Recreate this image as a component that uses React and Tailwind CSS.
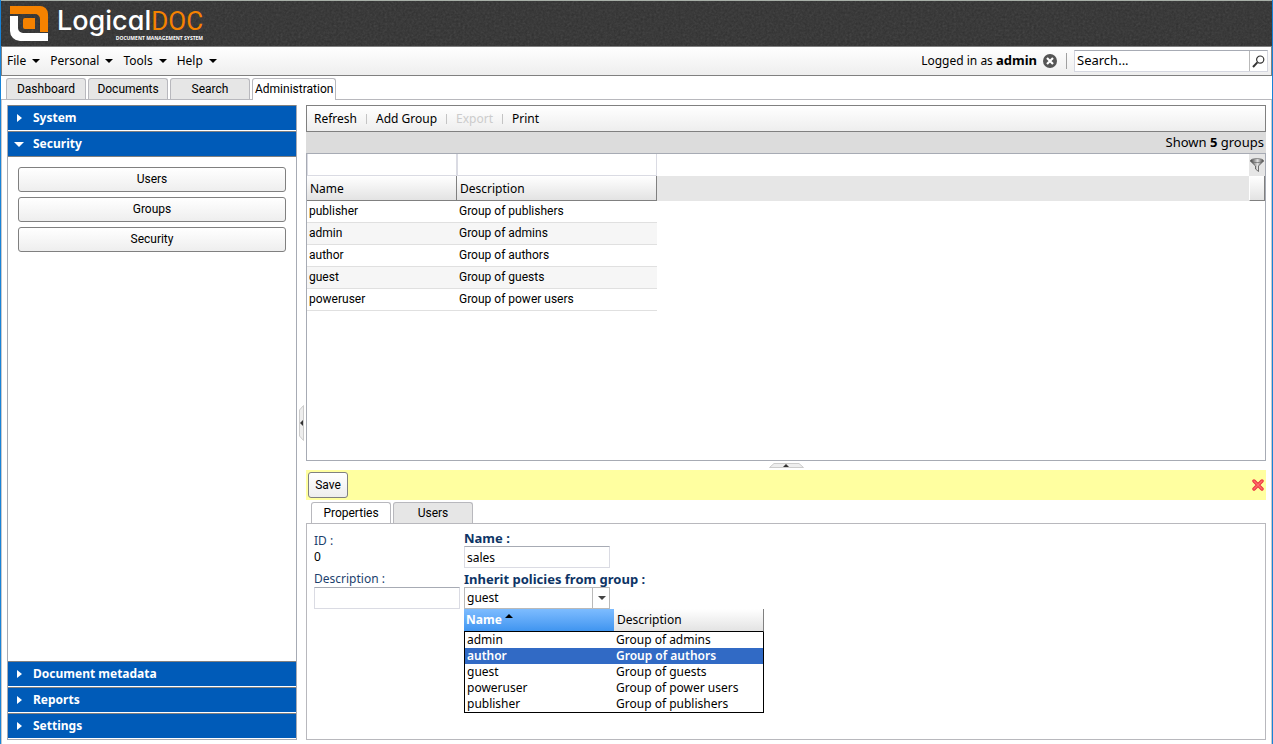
import React from "react";
import { useState } from "react";

const groups = [
  { name: "publisher", description: "Group of publishers" },
  { name: "admin", description: "Group of admins" },
  { name: "author", description: "Group of authors" },
  { name: "guest", description: "Group of guests" },
  { name: "poweruser", description: "Group of power users" },
];

const sortedGroups = [...groups].sort((a, b) => a.name.localeCompare(b.name));

const Logo = () => {
  return (
    <a href="#" className="relative flex items-start pl-[9px] pt-1">
      <svg width="38" height="36" viewBox="0 0 38 36">
        <path d="M0 1h30a8 8 0 0 1 8 8v18h-8V14a5 5 0 0 0-5-5H0z" fill="#f58200" />
        <path d="M0 11h8v12a5 5 0 0 0 5 5h25v8H10A10 10 0 0 1 0 26z" fill="#fff" />
        <path d="M15 13h10v11H15a2 2 0 0 1-2-2v-7a2 2 0 0 1 2-2z" fill="#f58200" />
      </svg>
      <div className="flex flex-col items-end pl-[9px]">
        <div className="flex items-baseline leading-8">
          <span className="font-['Inter',sans-serif] text-[27px] font-medium text-white [font-feature-settings:'cv11']">
            Logical
          </span>
          <span className="font-['Roboto',sans-serif] text-[26px] text-[#f58200]">DOC</span>
        </div>
        <span className="-mt-px font-['Open_Sans',sans-serif] text-[5px] font-bold leading-[4px] text-white">
          DOCUMENT MANAGEMENT SYSTEM
        </span>
      </div>
    </a>
  );
};

const Header = () => {
  return (
    <header className="relative h-[46px] shrink-0 overflow-hidden border-t border-[#a8b0a8] bg-[#303030]">
      <svg className="absolute inset-0 h-full w-full opacity-15" aria-hidden="true">
        <filter id="grain">
          <feTurbulence type="fractalNoise" baseFrequency="0.45" numOctaves="2" />
          <feColorMatrix type="saturate" values="0" />
        </filter>
        <rect width="100%" height="100%" filter="url(#grain)" />
      </svg>
      <Logo />
    </header>
  );
};

const MenuBar = () => {
  return (
    <div className="flex h-[30px] shrink-0 items-center justify-between border border-[#808080] bg-linear-to-b from-white to-[#eeeeee] pl-[5px] pr-[3px]">
      <nav className="flex gap-[10px]">
        {["File", "Personal", "Tools", "Help"].map((item) => (
          <button key={item} type="button" className="flex items-center gap-[6px]">
            {item}
            <svg width="8" height="4" viewBox="0 0 8 4">
              <path d="M0 0h8L4 4z" />
            </svg>
          </button>
        ))}
      </nav>
      <div className="flex items-center">
        <span>
          Logged in as <b className="text-[13px]">admin</b>
        </span>
        <button type="button" aria-label="Logout" className="ml-[6px]">
          <svg width="14" height="14" viewBox="0 0 14 14">
            <circle cx="7" cy="7" r="7" fill="#555" />
            <path d="M4 4l6 6M10 4l-6 6" stroke="#fff" strokeWidth="2.2" />
          </svg>
        </button>
        <div className="ml-[9px] mr-[7px] h-4 w-px bg-[#a0a0a0]" />
        <div className="flex h-[22px] border border-[#d5d7e0] border-t-[#a7abb4] bg-white">
          <input
            aria-label="Search"
            defaultValue="Search..."
            className="w-[174px] px-[2px] text-[13px] outline-none"
          />
          <button
            type="button"
            aria-label="Search"
            className="flex w-[18px] items-center justify-center border-l border-[#b9b9b9]"
          >
            <svg width="13" height="13" viewBox="0 0 13 13" fill="none" stroke="#333">
              <circle cx="8.2" cy="4.6" r="3.6" strokeWidth="1.2" />
              <path d="M5.4 7.4L1 12" strokeWidth="2" />
            </svg>
          </button>
        </div>
      </div>
    </div>
  );
};

const Tab = ({ label, active }) => {
  return (
    <button
      type="button"
      role="tab"
      aria-selected={!!active}
      className={
        "min-w-[80px] rounded-t-[3px] border border-b-0 border-[#b8b8bd] px-[2px] font-['Roboto',sans-serif] " +
        (active ? "-mb-px h-[22px] bg-white pb-px" : "h-[21px] bg-[#e6e6e6]")
      }
    >
      {label}
    </button>
  );
};

const SectionHeader = ({ label, open }) => {
  return (
    <button
      type="button"
      aria-expanded={!!open}
      className={
        "flex h-[26px] w-full shrink-0 items-center border-t border-b border-t-[#808080] bg-[#005bb8] pl-[6px] text-left font-bold text-white " +
        (open ? "border-b-[#808080]" : "border-b-white")
      }
    >
      <svg width="12" height="10" viewBox="0 0 12 10" fill="#fff">
        {open ? <path d="M0 3h10l-5 5z" /> : <path d="M3 1l5 4-5 4z" />}
      </svg>
      <span className="pl-[7px]">{label}</span>
    </button>
  );
};

const Sidebar = () => {
  return (
    <aside className="flex w-[290px] shrink-0 flex-col border border-t-0 border-[#a7abb4]">
      <SectionHeader label="System" />
      <SectionHeader label="Security" open />
      <div className="flex grow flex-col gap-[5px] p-[10px]">
        {["Users", "Groups", "Security"].map((item) => (
          <button
            key={item}
            type="button"
            className="h-[25px] rounded-[3px] border border-[#808080] bg-linear-to-b from-white to-[#eeeeee] pb-[2px] font-['Roboto',sans-serif]"
          >
            {item}
          </button>
        ))}
      </div>
      <SectionHeader label="Document metadata" />
      <SectionHeader label="Reports" />
      <SectionHeader label="Settings" />
    </aside>
  );
};

const Toolbar = () => {
  return (
    <div className="flex h-[27px] shrink-0 items-center gap-[9px] border border-[#808080] bg-linear-to-b from-white to-[#eeeeee] px-[7px]">
      <button type="button">Refresh</button>
      <div className="h-[10px] w-px bg-[#c4c4c4]" />
      <button type="button">Add Group</button>
      <div className="h-[10px] w-px bg-[#c4c4c4]" />
      <button type="button" disabled className="text-[#cccccc]">
        Export
      </button>
      <div className="h-[10px] w-px bg-[#c4c4c4]" />
      <button type="button">Print</button>
    </div>
  );
};

const GroupsGrid = () => {
  return (
    <div className="relative min-h-0 grow border border-[#a7abb4]">
      {/* filter and header strips that run on past the last column */}
      <div className="flex h-[22px] justify-end">
        <button
          type="button"
          aria-label="Filter"
          className="flex w-4 items-center justify-center bg-[#e6e6e6]"
        >
          <svg width="14" height="14" viewBox="0 0 14 14">
            <defs>
              <linearGradient id="funnel">
                <stop offset="0" stopColor="#444" />
                <stop offset="0.55" stopColor="#e2e2e2" />
                <stop offset="1" stopColor="#444" />
              </linearGradient>
            </defs>
            <path d="M.4 3L5.500 8v3l3 2.500V8l5-5z" fill="url(#funnel)" stroke="#555" strokeWidth="0.8" />
            <ellipse cx="7" cy="2.6" rx="6.5" ry="2" fill="url(#funnel)" stroke="#666" strokeWidth="0.7" />
          </svg>
        </button>
      </div>
      <div className="flex h-[25px] justify-end bg-[#e6e6e6]">
        <div className="w-4 border-r border-b border-l border-[#808080] border-l-white bg-linear-to-b from-white to-[#e3e3e3]" />
      </div>
      <table className="absolute left-0 top-0 w-[350px] table-fixed border-separate border-spacing-0 text-left">
        <thead>
          <tr className="h-[22px]">
            <td className="w-[150px] p-0">
              <input
                aria-label="Filter by name"
                className="block h-[22px] w-full border border-t-0 border-[#dadbe3] bg-white px-[2px] outline-none"
              />
            </td>
            <td className="w-[200px] p-0">
              <input
                aria-label="Filter by description"
                className="block h-[22px] w-full border border-t-0 border-[#dadbe3] bg-white px-[2px] outline-none"
              />
            </td>
          </tr>
          <tr className="h-[25px]">
            <th className="border-r border-b border-[#808080] bg-linear-to-b from-white to-[#e3e3e3] px-[3px] pt-[2px] pb-0 font-normal">
              Name
            </th>
            <th className="border-r border-b border-[#808080] bg-linear-to-b from-white to-[#e3e3e3] px-[3px] pt-[2px] pb-0 font-normal">
              Description
            </th>
          </tr>
        </thead>
        <tbody className="font-['Roboto',sans-serif] leading-4">
          {groups.map((group) => (
            <tr key={group.name} className="h-[22px] bg-white even:bg-[#f6f6f6]">
              <td className="border-b border-[#e0e0e0] px-[2px] pt-0 pb-[2px]">{group.name}</td>
              <td className="border-b border-[#e0e0e0] px-[2px] pt-0 pb-[2px]">
                {group.description}
              </td>
            </tr>
          ))}
        </tbody>
      </table>
    </div>
  );
};

const GroupPicker = ({ highlighted, onPick }) => {
  return (
    <table className="absolute left-0 top-full z-10 w-[300px] table-fixed border-separate border-spacing-0 bg-white text-left">
      <thead>
        <tr className="h-[23px]">
          <th className="w-[150px] border-b border-black bg-linear-to-b from-[#7dbcff] to-[#3f95f0] px-[2px] py-0 font-bold leading-4 text-white">
            <span className="flex items-start gap-[3px]">
              Name
              <svg width="8" height="6" viewBox="0 0 8 6">
                <path d="M0 6h8L4 2z" />
              </svg>
            </span>
          </th>
          <th className="border-r border-b border-r-[#808080] border-b-black bg-linear-to-b from-white to-[#e3e3e3] px-[3px] py-0 font-normal leading-4">
            Description
          </th>
        </tr>
      </thead>
      <tbody>
        {sortedGroups.map((group) => (
          <tr
            key={group.name}
            onClick={() => onPick(group.name)}
            className={
              "h-4 last:*:border-b " +
              (group.name === highlighted ? "bg-[#316ac5] font-semibold text-white" : "")
            }
          >
            <td className="border-l border-black px-[2px] py-0 leading-4">{group.name}</td>
            <td className="border-r border-black px-[2px] py-0 leading-4">{group.description}</td>
          </tr>
        ))}
      </tbody>
    </table>
  );
};

const PropertiesForm = () => {
  const [formState, setFormState] = useState({
    name: "sales",
    description: "",
    inherit: "guest",
  });
  const handleInputChange = (e) => {
    setFormState({ ...formState, [e.target.name]: e.target.value });
  };
  return (
    <form className="grid grid-cols-[146px_146px] gap-x-1 gap-y-[3px] px-[7px] py-[6px] leading-4">
      <div className="flex h-[38px] flex-col justify-center">
        <span className="text-[#1c3f6e]">ID :</span>
        <span>0</span>
      </div>
      <div className="flex flex-col">
        <label htmlFor="name" className="text-[13px] font-bold leading-4 text-[#0d3465]">
          Name :
        </label>
        <input
          id="name"
          name="name"
          value={formState.name}
          onChange={handleInputChange}
          className="h-[22px] border border-[#dadbe3] border-t-[#a7abb4] px-[2px] outline-none"
        />
      </div>
      <div className="flex flex-col">
        <label htmlFor="description" className="text-[#1c3f6e]">
          Description :
        </label>
        <input
          id="description"
          name="description"
          value={formState.description}
          onChange={handleInputChange}
          className="h-[22px] border border-[#dadbe3] border-t-[#a7abb4] px-[2px] outline-none"
        />
      </div>
      <div className="relative flex flex-col">
        <label
          htmlFor="inherit"
          className="whitespace-nowrap text-[13px] font-bold leading-4 text-[#0d3465]"
        >
          Inherit policies from group :
        </label>
        <div className="relative h-[22px]">
          <select
            id="inherit"
            name="inherit"
            value={formState.inherit}
            onChange={handleInputChange}
            className="h-full w-full appearance-none border border-[#b9b9b9] px-[2px] outline-none"
          >
            {sortedGroups.map((group) => (
              <option key={group.name}>{group.name}</option>
            ))}
          </select>
          <div className="pointer-events-none absolute inset-y-0 right-0 flex w-[18px] items-center justify-center border-l border-[#b9b9b9]">
            <svg width="8" height="4" viewBox="0 0 8 4">
              <path d="M0 0h8L4 4z" fill="#444" />
            </svg>
          </div>
        </div>
        <GroupPicker
          highlighted="author"
          onPick={(name) => setFormState({ ...formState, inherit: name })}
        />
      </div>
    </form>
  );
};

const App = () => {
  return (
    <div className="flex h-screen flex-col border-r border-l border-[#1883d7] bg-white font-['Noto_Sans',sans-serif] text-[12px] text-black">
      <Header />
      <MenuBar />
      <div role="tablist" className="mt-[2px] flex shrink-0 gap-[2px] border-b border-[#b8b8bd] pl-[5px]">
        <Tab label="Dashboard" />
        <Tab label="Documents" />
        <Tab label="Search" />
        <Tab label="Administration" active />
      </div>
      <div className="flex min-h-0 grow border-r border-l border-[#c8c8cc] px-[5px] pt-[5px] pb-1">
        <Sidebar />
        <div className="flex w-[9px] shrink-0 items-center justify-center">
          <svg width="5" height="36" viewBox="0 0 5 36">
            <path d="M4.500.5v35L.5 31V5z" fill="#eee" stroke="#ccc" />
            <path d="M4 15v6l-3-3z" fill="#333" />
          </svg>
        </div>
        <main className="flex min-w-0 grow flex-col">
          <Toolbar />
          <div className="flex h-[21px] shrink-0 items-center justify-end bg-[#dcdcdc] pr-[2px] text-[13px]">
            <span>
              Shown <b>5</b> groups
            </span>
          </div>
          <GroupsGrid />
          <div className="flex h-[9px] shrink-0 items-center justify-center">
            <svg width="35" height="5" viewBox="0 0 35 5">
              <path d="M.5 4.500L5 .5h25l4.500 4z" fill="#eee" stroke="#ccc" />
              <path d="M14 4h6l-3-3z" fill="#333" />
            </svg>
          </div>
          <div className="flex h-[30px] shrink-0 items-center justify-between bg-[#ffffa0] pr-[2px] pl-[2px]">
            <button
              type="button"
              className="h-[26px] w-10 rounded-[3px] border border-[#808080] bg-linear-to-b from-white to-[#eeeeee] font-['Roboto',sans-serif]"
            >
              Save
            </button>
            <button type="button" aria-label="Close">
              <svg width="12" height="12" viewBox="0 0 12 12">
                <path d="M2 2l8 8M10 2l-8 8" stroke="#e8303a" strokeWidth="3.400" strokeLinecap="round" />
                <path d="M2 2l8 8M10 2l-8 8" stroke="#ff6b6b" strokeWidth="1.600" strokeLinecap="round" />
              </svg>
            </button>
          </div>
          <div role="tablist" className="mt-[2px] flex shrink-0 gap-[2px] px-[5px]">
            <Tab label="Properties" active />
            <Tab label="Users" />
          </div>
          <div className="h-[217px] shrink-0 border border-[#b8b8bd]">
            <PropertiesForm />
          </div>
        </main>
      </div>
    </div>
  );
};

export default App;
